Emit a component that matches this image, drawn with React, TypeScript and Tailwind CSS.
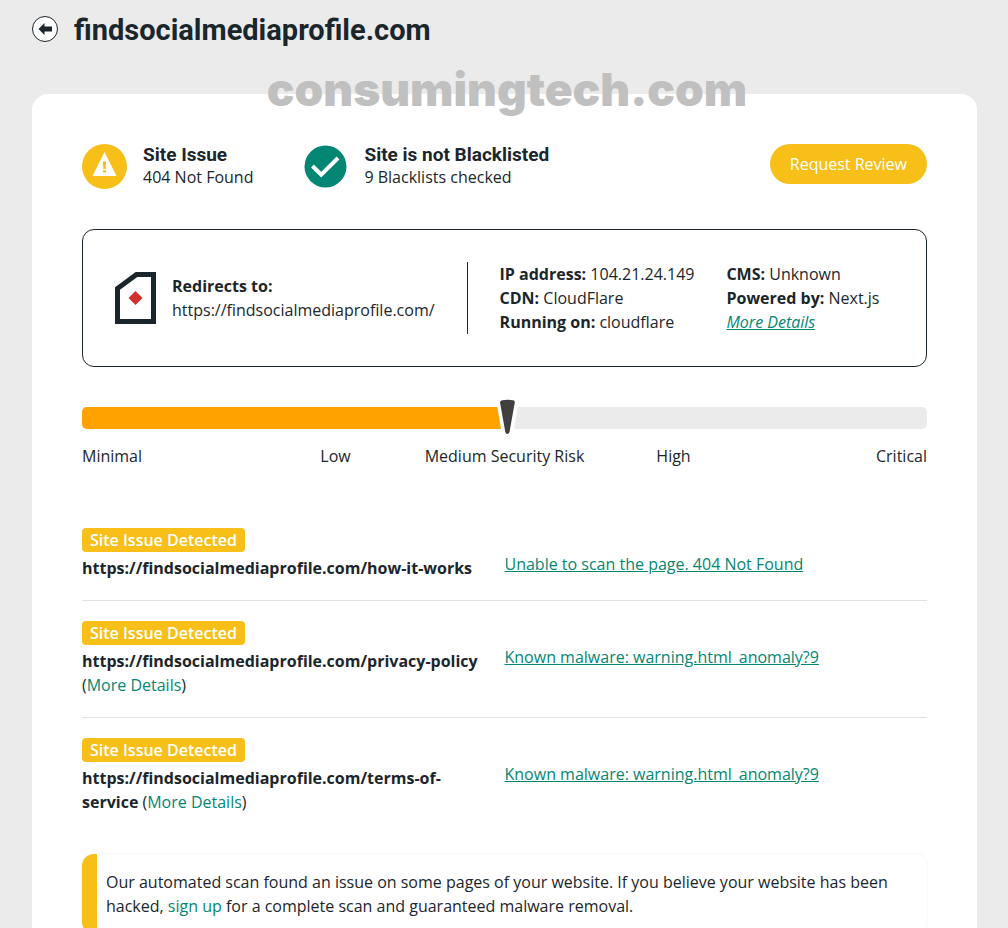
import type { ReactNode } from 'react';

interface Issue {
  url: string;
  message: string;
  hasDetails: boolean;
}

const issues: Issue[] = [
  {
    url: 'https://findsocialmediaprofile.com/how-it-works',
    message: 'Unable to scan the page. 404 Not Found',
    hasDetails: false,
  },
  {
    url: 'https://findsocialmediaprofile.com/privacy-policy',
    message: 'Known malware: warning.html_anomaly?9',
    hasDetails: true,
  },
  {
    url: 'https://findsocialmediaprofile.com/terms-of-service',
    message: 'Known malware: warning.html_anomaly?9',
    hasDetails: true,
  },
];

const WarningIcon = () => (
  <svg width="45" height="45" viewBox="0 0 45 45" className="shrink-0" aria-hidden="true">
    <circle cx="22.5" cy="22.5" r="22.5" fill="#f7bf18" />
    <path d="M22.5 8 34.5 32h-24z" fill="#fff" />
    <path d="M20.9 17.5h3.2l-.5 7.5h-2.2zM21 26.2h3v2.4h-3z" fill="#f7bf18" />
  </svg>
);

const CheckIcon = () => (
  <svg width="45" height="45" viewBox="0 0 45 45" className="shrink-0" aria-hidden="true">
    <circle cx="22.5" cy="22.5" r="21" fill="#038774" />
    <path d="m9.500 22 8.700 8.700L35 14" fill="none" stroke="#fff" strokeWidth="4" />
  </svg>
);

const PageIcon = () => (
  <svg width="41" height="52" viewBox="0 0 41 52" className="shrink-0" aria-hidden="true">
    <path d="M2.5 16.5 21.5 2.5h17v47h-36z" fill="#fff" stroke="#1b262c" strokeWidth="5" />
    <path d="m20.5 19 7 7-7 7-7-7z" fill="#d0312d" />
  </svg>
);

const Status = ({ icon, title, text }: { icon: ReactNode; title: string; text: string }) => (
  <div className="flex gap-4">
    {icon}
    <div className="leading-[22px]">
      <h2 className="font-[Roboto] text-[19px] leading-[22px] font-bold">{title}</h2>
      <p>{text}</p>
    </div>
  </div>
);

const Fact = ({ label, value }: { label: string; value: string }) => (
  <p>
    <b>{label}</b> {value}
  </p>
);

const RiskMeter = () => (
  <section className="mt-10">
    <div className="relative">
      <div
        role="meter"
        aria-label="Security risk"
        aria-valuemin={0}
        aria-valuemax={100}
        aria-valuenow={50}
        className="h-[22px] overflow-hidden rounded-[5px] bg-[#ebebeb]"
      >
        <div className="h-full w-1/2 bg-[#ffa200]" />
      </div>
      <svg
        width="24"
        height="36"
        viewBox="0 0 24 36"
        className="absolute -top-2 left-[49%]"
        aria-hidden="true"
      >
        <path d="M0 0h23l-6 36H6z" fill="#fff" />
        <path d="M4 3.500Q4 1.500 6 1.200q5.500-.9 11 0Q19 1.500 18.800 3.500L13.500 33q-.6 2-2.200 2-1.500 0-2-2z" fill="#404040" />
      </svg>
    </div>
    <div className="mt-[15px] grid grid-cols-5 text-center whitespace-nowrap">
      <span className="text-left">Minimal</span>
      <span>Low</span>
      <span>Medium Security Risk</span>
      <span>High</span>
      <span className="text-right">Critical</span>
    </div>
  </section>
);

const IssueRow = ({ url, message, hasDetails }: Issue) => (
  <li className="grid grid-cols-2 border-b border-[#dee2e6] py-5 last:border-b-0">
    <div className="pr-6">
      <span className="block w-fit rounded bg-[#f7bf18] px-2 font-semibold text-white">
        Site Issue Detected
      </span>
      <p className="mt-1">
        <b>{url}</b>
        {hasDetails && (
          <>
            {' '}
            (<a href="#details" className="text-[#038774]">More Details</a>)
          </>
        )}
      </p>
    </div>
    <div className="pt-6">
      <a href="#issue" className="text-[#038774] underline">{message}</a>
    </div>
  </li>
);

const App = () => (
  <div className="relative min-h-screen bg-[#ebebeb] pr-[31px] pl-8 font-['Open_Sans',sans-serif] text-base leading-6 text-[#1b262c]">
    <header className="flex h-[94px] items-start gap-4 pt-3">
      <a href="#back" aria-label="Back" className="mt-1 shrink-0">
        <svg width="26" height="26" viewBox="0 0 26 26" aria-hidden="true">
          <circle cx="13" cy="13" r="12.500" fill="#fff" stroke="#1b262c" />
          <path d="M6.500 13 12.500 7v3.500H20v5h-7.500V19z" fill="#1b262c" />
        </svg>
      </a>
      <h1 className="font-[Roboto] text-[29px] leading-9 font-bold">findsocialmediaprofile.com</h1>
    </header>

    <main className="rounded-t-2xl bg-white px-[50px] pt-[50px] pb-5">
      <div className="flex items-start justify-between">
        <div className="flex gap-[50px]">
          <Status icon={<WarningIcon />} title="Site Issue" text="404 Not Found" />
          <Status icon={<CheckIcon />} title="Site is not Blacklisted" text="9 Blacklists checked" />
        </div>
        <button type="button" className="h-10 rounded-full bg-[#f7bf18] px-5 text-white">
          Request Review
        </button>
      </div>

      <section className="mt-10 flex items-center gap-8 rounded-xl border border-[#1b262c] p-8">
        <div className="flex items-center gap-4">
          <PageIcon />
          <div>
            <b>Redirects to:</b>
            <p>https://findsocialmediaprofile.com/</p>
          </div>
        </div>
        <div className="flex gap-8 border-l border-[#1b262c] pl-8">
          <div>
            <Fact label="IP address:" value="104.21.24.149" />
            <Fact label="CDN:" value="CloudFlare" />
            <Fact label="Running on:" value="cloudflare" />
          </div>
          <div>
            <Fact label="CMS:" value="Unknown" />
            <Fact label="Powered by:" value="Next.js" />
            <a href="#more" className="text-[#038774] italic underline">More Details</a>
          </div>
        </div>
      </section>

      <RiskMeter />

      <ul className="mt-10">
        {issues.map((issue) => (
          <IssueRow key={issue.url} {...issue} />
        ))}
      </ul>

      <div className="mt-5 rounded-xl border-l-[15px] border-[#f7bf18] py-4 pr-6 pl-[9px] shadow-[0_0_2px_#00000018]">
        Our automated scan found an issue on some pages of your website. If you believe your website has
        been hacked, <a href="#signup" className="text-[#038774]">sign up</a> for a complete scan and
        guaranteed malware removal.
      </div>
    </main>

    {/* Watermark */}
    <div className="pointer-events-none absolute inset-x-0 top-16 pl-1.5 text-center font-[Inter] text-[46px] leading-[50px] font-black text-[#c0c0c0]">
      consumingtech.com
    </div>
  </div>
);

export default App;
